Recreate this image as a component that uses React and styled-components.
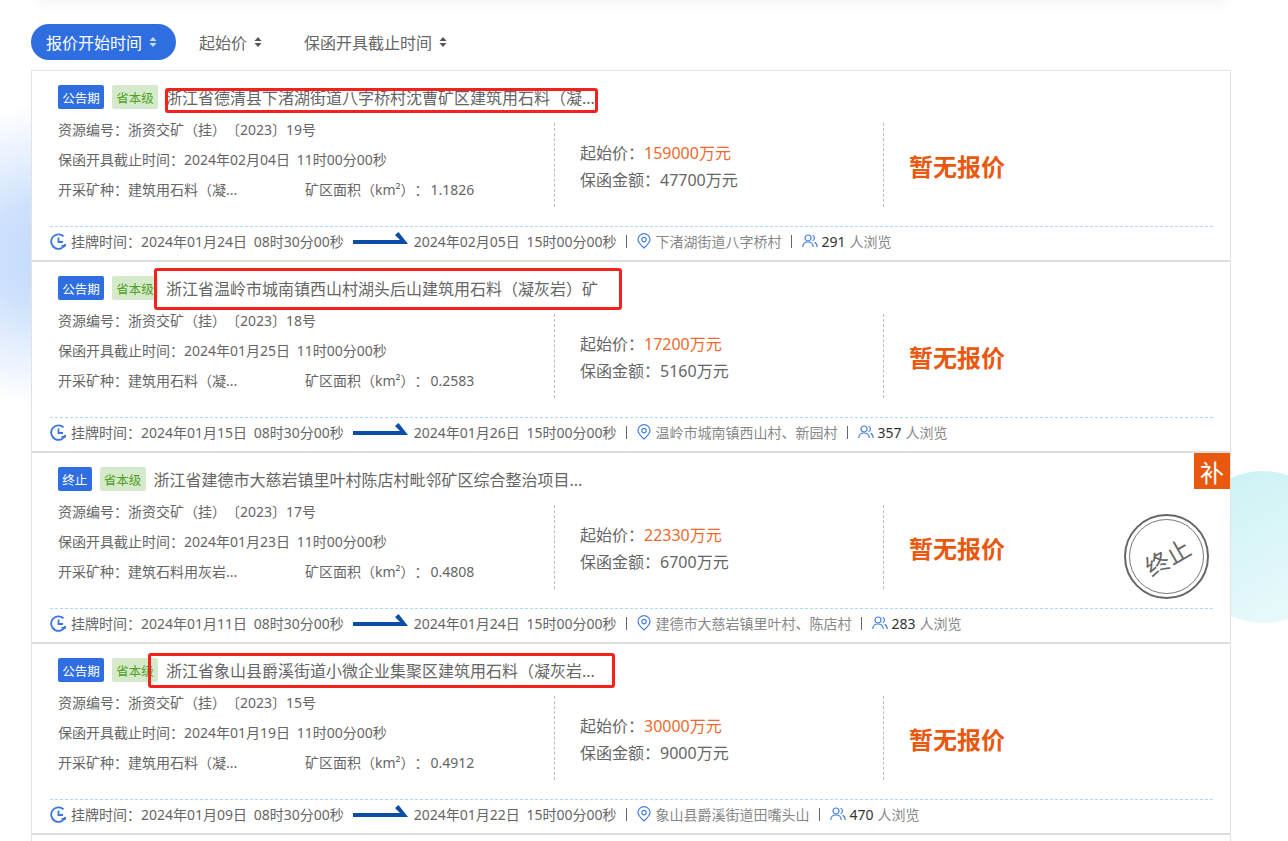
import React from 'react';
import styled, { createGlobalStyle } from 'styled-components';

const GlobalStyle = createGlobalStyle`
	html, body {
		margin: 0;
		padding: 0;
		background: #fff;
	}
	body {
		font-family: "Noto Sans", "Noto Sans CJK SC", sans-serif;
		color: #666;
		text-spacing-trim: space-all;
	}
`;

const Page = styled.div`
	position: relative;
	height: 841px;
	overflow: hidden;
	padding-top: 24px;
	box-sizing: border-box;
`;

const TopShade = styled.div`
	position: absolute;
	top: -12px;
	left: 36px;
	width: 1190px;
	height: 12px;
	background: #f6f6f6;
	box-shadow: 0 2px 14px rgba(0, 0, 0, 0.06);
`;

const BlueGlow = styled.div`
	position: absolute;
	left: 0;
	top: 80px;
	width: 32px;
	height: 340px;
	background: radial-gradient(130px 150px at 36px 175px, #c3dbfb 0%, #cfe2fc 35%, #e6f0fe 65%, #ffffff 100%);
`;

const TealCircle = styled.div`
	position: absolute;
	left: 1187px;
	top: 471px;
	width: 152px;
	height: 152px;
	border-radius: 50%;
	background: linear-gradient(150deg, #c9f2f4, #eefafc);
`;

const SortBar = styled.div`
	position: relative;
	display: flex;
	align-items: center;
	height: 36px;
	margin: 0 0 10px 31px;
`;

const SortItem = styled.div`
	display: flex;
	align-items: center;
	gap: 7px;
	height: 36px;
	box-sizing: border-box;
	padding: ${p => (p.$active ? '0 19px 0 15px' : '0')};
	margin-right: ${p => p.$gap}px;
	border-radius: 18px;
	font-size: 16px;
	color: ${p => (p.$active ? '#fff' : '#666')};
	background: ${p => (p.$active ? '#2f6ee0' : 'transparent')};
`;

const List = styled.div`
	position: relative;
	width: 1200px;
	margin-left: 31px;
	box-sizing: border-box;
	background: #fff;
	border: 1px solid #e2e2e2;
	border-bottom: 0;
`;

const Card = styled.div`
	position: relative;
	height: 191px;
	box-sizing: border-box;
	padding: 14px 17px 0 18px;
	border-bottom: 2px solid #dedede;
`;

const Head = styled.div`
	display: flex;
	align-items: center;
	gap: 8px;
	height: 24px;
	padding-left: 8px;
`;

const Tag = styled.span`
	display: inline-flex;
	align-items: center;
	justify-content: center;
	height: 24px;
	padding: 0 4.25px;
	border-radius: 2px;
	font-size: 12.5px;
	color: ${p => (p.$green ? '#4f9f1f' : '#fff')};
	background: ${p => (p.$green ? '#d5eaca' : '#2f6ee0')};
`;

const Title = styled.div`
	font-size: 16px;
	color: #666;
	white-space: nowrap;
`;

const RedBox = styled.div`
	position: absolute;
	left: ${p => p.$left}px;
	top: ${p => p.$top}px;
	width: ${p => p.$width}px;
	height: ${p => p.$height}px;
	box-sizing: border-box;
	border: 3px solid #f5211c;
	border-radius: 3px;
`;

const Body = styled.div`
	display: flex;
	height: 92px;
	margin: 6px 0 19px;
	padding-left: 8px;
`;

const Meta = styled.div`
	width: 496px;
	font-size: 14px;
	line-height: 30px;
	color: #666;
`;

const MetaRow = styled.div`
	display: flex;
	height: 30px;
	white-space: pre;
	word-spacing: 3px;
`;

const MetaCell = styled.div`
	width: 247px;
`;

const AreaValue = styled.span`
	margin-left: 2px;
`;

const Price = styled.div`
	display: flex;
	flex-direction: column;
	justify-content: center;
	width: 303px;
	height: 84px;
	margin-top: 8px;
	padding: 4px 0 0 25px;
	box-sizing: content-box;
	height: 80px;
	border-left: 1px dashed #bdbdbd;
	border-right: 1px dashed #bdbdbd;
	font-size: 16px;
	line-height: 27px;
	color: #666;
`;

const PriceValue = styled.span`
	color: #ee6a2c;
`;

const Offer = styled.div`
	display: flex;
	align-items: center;
	height: 84px;
	margin-top: 8px;
	padding-left: 25px;
	font-size: 24px;
	font-weight: 700;
	color: #e8590f;
`;

const Footer = styled.div`
	display: flex;
	align-items: center;
	height: 33px;
	padding-bottom: 4px;
	box-sizing: border-box;
	border-top: 1px dashed #aad9fb;
	font-size: 14px;
	color: #666;
	white-space: pre;
	word-spacing: 3px;
`;

const ClockWrap = styled.span`
	display: inline-flex;
	margin-right: 4px;
`;

const ArrowWrap = styled.span`
	display: inline-flex;
	margin: -5px 6px 0 9px;
`;

const Sep = styled.span`
	width: 1px;
	height: 13px;
	margin: 0 10px 0 9px;
	background: #666;
`;

const Place = styled.span`
	color: #888;
	margin-left: 5px;
`;

const Count = styled.span`
	color: #333;
	margin-left: 4px;
`;

const Viewers = styled.span`
	color: #888;
	margin-left: 4px;
`;

const Corner = styled.div`
	position: absolute;
	top: 0;
	right: 0;
	width: 36px;
	height: 36px;
	display: flex;
	align-items: center;
	justify-content: center;
	background: #e8590f;
	color: #fff;
	font-size: 24px;
`;

const Stamp = styled.div`
	position: absolute;
	left: 1092px;
	top: 61px;
	width: 85px;
	height: 85px;
	box-sizing: border-box;
	border: 2px solid #666;
	border-radius: 50%;
	display: flex;
	align-items: center;
	justify-content: center;
	&::before {
		content: '';
		position: absolute;
		inset: 3px;
		border: 1px solid #777;
		border-radius: 50%;
	}
`;

const StampText = styled.span`
	font-size: 24px;
	color: #666;
	transform: rotate(-30deg);
`;

const Tail = styled.div`
	height: 10px;
`;

const SortIcon = ({ color }) => (
	<svg width="8" height="12" viewBox="0 0 8 12">
		<path d="M4 1 L7.5 5 H0.5 Z" fill={color} />
		<path d="M4 11 L0.5 7 H7.5 Z" fill={color} />
	</svg>
);

const ClockIcon = () => (
	<svg width="17" height="17" viewBox="0 0 17 17" fill="none" stroke="#3a76e0" strokeWidth="1.8">
		<path d="M15.4 11 A7.3 7.3 0 1 1 13.6 3.4" />
		<path d="M8.5 4.5 V9 H13" />
		<path d="M11.5 12.8 H15.8" />
	</svg>
);

const ArrowIcon = () => (
	<svg width="55" height="13" viewBox="0 0 55 13">
		<path d="M0 8 H47 L42 3 L45.5 0 L55 12 H0 Z" fill="#0b4ea6" />
	</svg>
);

const PinIcon = () => (
	<svg width="14" height="16" viewBox="0 0 14 16" fill="none" stroke="#4a80dc" strokeWidth="1.2">
		<path d="M7 15 C3.5 12 1 9.6 1 6.6 A6 6 0 0 1 13 6.6 C13 9.6 10.5 12 7 15 Z" />
		<circle cx="7" cy="6.6" r="2.2" />
	</svg>
);

const UsersIcon = () => (
	<svg width="16" height="14" viewBox="0 0 16 14" fill="none" stroke="#4a80dc" strokeWidth="1.2">
		<circle cx="6" cy="4" r="3" />
		<path d="M0.8 13 C0.8 9.8 3 8 6 8 C9 8 11.2 9.8 11.2 13" />
		<path d="M10.5 1.2 A3 3 0 0 1 10.5 6.8" />
		<path d="M12.6 8.4 C14.2 9.2 15.2 10.8 15.2 13" />
	</svg>
);

const ITEMS = [
	{
		status: '公告期',
		title: '浙江省德清县下渚湖街道八字桥村沈曹矿区建筑用石料（凝...',
		code: '19',
		deadline: '2024年02月04日',
		kind: '建筑用石料（凝...',
		area: '1.1826',
		price: '159000',
		deposit: '47700',
		start: '2024年01月24日',
		end: '2024年02月05日',
		place: '下渚湖街道八字桥村',
		views: 291,
		box: { left: 133, top: 17, width: 433, height: 25 },
	},
	{
		status: '公告期',
		title: '浙江省温岭市城南镇西山村湖头后山建筑用石料（凝灰岩）矿',
		code: '18',
		deadline: '2024年01月25日',
		kind: '建筑用石料（凝...',
		area: '0.2583',
		price: '17200',
		deposit: '5160',
		start: '2024年01月15日',
		end: '2024年01月26日',
		place: '温岭市城南镇西山村、新园村',
		views: 357,
		box: { left: 122, top: 6, width: 468, height: 42 },
	},
	{
		status: '终止',
		title: '浙江省建德市大慈岩镇里叶村陈店村毗邻矿区综合整治项目...',
		code: '17',
		deadline: '2024年01月23日',
		kind: '建筑石料用灰岩...',
		area: '0.4808',
		price: '22330',
		deposit: '6700',
		start: '2024年01月11日',
		end: '2024年01月24日',
		place: '建德市大慈岩镇里叶村、陈店村',
		views: 283,
		stopped: true,
	},
	{
		status: '公告期',
		title: '浙江省象山县爵溪街道小微企业集聚区建筑用石料（凝灰岩...',
		code: '15',
		deadline: '2024年01月19日',
		kind: '建筑用石料（凝...',
		area: '0.4912',
		price: '30000',
		deposit: '9000',
		start: '2024年01月09日',
		end: '2024年01月22日',
		place: '象山县爵溪街道田嘴头山',
		views: 470,
		box: { left: 116, top: 9, width: 467, height: 35 },
	},
];

const ProjectCard = ({ item }) => (
	<Card>
		<Head>
			<Tag>{item.status}</Tag>
			<Tag $green>省本级</Tag>
			<Title>{item.title}</Title>
		</Head>
		<Body>
			<Meta>
				<MetaRow>资源编号：浙资交矿（挂）〔2023〕{item.code}号</MetaRow>
				<MetaRow>保函开具截止时间：{item.deadline} 11时00分00秒</MetaRow>
				<MetaRow>
					<MetaCell>开采矿种：{item.kind}</MetaCell>
					<span>矿区面积（km²）：<AreaValue>{item.area}</AreaValue></span>
				</MetaRow>
			</Meta>
			<Price>
				<div>起始价：<PriceValue>{item.price}万元</PriceValue></div>
				<div>保函金额：{item.deposit}万元</div>
			</Price>
			<Offer>暂无报价</Offer>
		</Body>
		<Footer>
			<ClockWrap><ClockIcon /></ClockWrap>
			挂牌时间：{item.start} 08时30分00秒
			<ArrowWrap><ArrowIcon /></ArrowWrap>
			{item.end} 15时00分00秒
			<Sep />
			<PinIcon />
			<Place>{item.place}</Place>
			<Sep />
			<UsersIcon />
			<Count>{item.views}</Count>
			<Viewers>人浏览</Viewers>
		</Footer>
		{item.box && <RedBox $left={item.box.left} $top={item.box.top} $width={item.box.width} $height={item.box.height} />}
		{item.stopped && <Corner>补</Corner>}
		{item.stopped && <Stamp><StampText>终止</StampText></Stamp>}
	</Card>
);

const App = () => {
	return (
		<Page>
			<GlobalStyle />
			<TopShade />
			<BlueGlow />
			<TealCircle />
			<SortBar>
				<SortItem $active $gap={23}>报价开始时间<SortIcon color="#cfe0fb" /></SortItem>
				<SortItem $gap={42}>起始价<SortIcon color="#555" /></SortItem>
				<SortItem $gap={0}>保函开具截止时间<SortIcon color="#555" /></SortItem>
			</SortBar>
			<List>
				{ITEMS.map(item => <ProjectCard key={item.code} item={item} />)}
				<Tail />
			</List>
		</Page>
	);
};

export default App;
